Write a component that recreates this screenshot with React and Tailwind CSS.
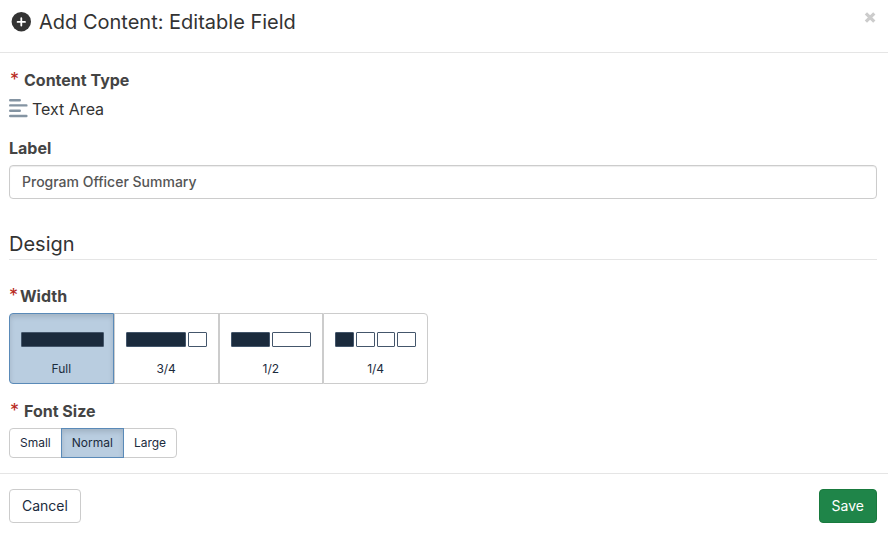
import React, { useState } from 'react';

const WIDTHS = [
  { id: 'full', label: 'Full', bars: [{ size: 'w-[83px]', filled: true }] },
  {
    id: 'three-quarters',
    label: '3/4',
    bars: [
      { size: 'w-[60px]', filled: true },
      { size: 'w-[19px]' }
    ]
  },
  {
    id: 'half',
    label: '1/2',
    bars: [
      { size: 'w-[39px]', filled: true },
      { size: 'w-[39px]' }
    ]
  },
  {
    id: 'quarter',
    label: '1/4',
    bars: [
      { size: 'w-[19px]', filled: true },
      { size: 'w-[19px]' },
      { size: 'w-[18px]' },
      { size: 'w-[19px]' }
    ]
  }
];

const FONT_SIZES = ['Small', 'Normal', 'Large'];

const SELECTED = 'z-10 border-[#5a8ab8] bg-[#b9cde0] shadow-[inset_0_3px_5px_rgba(0,0,0,0.125)]';
const UNSELECTED = 'border-[#cccccc] bg-white';

const PlusCircleIcon = () => (
  <svg className="size-5" viewBox="0 0 20 20" aria-hidden="true">
    <circle cx="10.3" cy="9.7" r="9.7" fill="#333333" />
    <path d="M10.3 6.2v7.4M6.6 9.9h7.4" stroke="#ffffff" strokeWidth="1.8" strokeLinecap="round" />
  </svg>
);

const AlignLeftIcon = () => (
  <svg className="h-5 w-[19px]" viewBox="0 0 19 20" fill="none" aria-hidden="true">
    <path
      d="M1.2 1.2h9.6M1.2 6.4h16.2M1.2 11.7h9.6M1.2 17h16.2"
      stroke="#8494a2"
      strokeWidth="2.4"
      strokeLinecap="round"
    />
  </svg>
);

const CloseIcon = () => (
  <svg className="size-3" viewBox="0 0 12 12" aria-hidden="true">
    <path d="M1.9 1.3l8.4 8.4M10.3 1.3L1.9 9.7" stroke="#cccccc" strokeWidth="3.2" />
  </svg>
);

const Required = () => (
  <span className="w-2 text-lg leading-6 font-normal text-[#b8291c]" aria-label="required">*</span>
);

const App = () => {
  const [label, setLabel] = useState('Program Officer Summary');
  const [width, setWidth] = useState('full');
  const [fontSize, setFontSize] = useState('Normal');

  return (
    <div
      className="bg-white font-['Inter',sans-serif] text-[#333333]"
      role="dialog"
      aria-labelledby="dialog-title"
    >
      {/* Header */}
      <header className="flex items-start justify-between border-b border-[#e5e5e5] pt-2 pr-3 pb-4 pl-[11px]">
        <div className="flex items-center gap-2">
          <PlusCircleIcon />
          <h1 id="dialog-title" className="text-[20px] leading-7">
            Add Content: Editable Field
          </h1>
        </div>
        <button type="button" className="mt-1" aria-label="Close">
          <CloseIcon />
        </button>
      </header>

      <form onSubmit={(e) => e.preventDefault()}>
        <div className="pt-[15px] pr-[11px] pb-[15px] pl-[9px]">
          {/* Content Type */}
          <div className="flex gap-1.5 pl-px text-base leading-6 font-bold text-[#444444]">
            <Required />
            <span>Content Type</span>
          </div>
          <div className="mt-[3px] flex items-center gap-1 text-base leading-7">
            <AlignLeftIcon />
            <span>Text Area</span>
          </div>

          {/* Label */}
          <label
            htmlFor="label"
            className="mt-[13px] block text-base leading-6 font-bold text-[#444444]"
          >
            Label
          </label>
          <input
            id="label"
            type="text"
            value={label}
            onChange={(e) => setLabel(e.target.value)}
            className="mt-[5px] block h-[34px] w-full rounded-sm border border-[#cccccc] px-3 pb-0.5 text-sm font-medium text-[#555555] shadow-[inset_0_1px_1px_rgba(0,0,0,0.075)] outline-none"
          />

          <h2 className="mt-[31px] border-b border-[#e5e5e5] pb-px text-[20px] leading-7">
            Design
          </h2>

          {/* Width */}
          <div
            id="width-label"
            className="mt-6 flex gap-[3px] text-base leading-6 font-bold text-[#444444]"
          >
            <Required />
            <span>Width</span>
          </div>
          <div
            className="mt-[5px] grid w-[419px] max-w-full grid-cols-4"
            role="group"
            aria-labelledby="width-label"
          >
            {WIDTHS.map((option) => (
              <button
                key={option.id}
                type="button"
                aria-pressed={width === option.id}
                onClick={() => setWidth(option.id)}
                className={`relative flex h-[71px] flex-col border px-[11px] pt-[18px] text-xs text-[#1b2b3d] first:rounded-l-sm last:rounded-r-sm ${
                  width === option.id ? SELECTED : UNSELECTED
                }`}
              >
                <span className="flex gap-0.5">
                  {option.bars.map((bar, index) => (
                    <span
                      key={index}
                      className={`h-[15px] shrink-0 rounded-[1px] border border-[#44566b] ${bar.size} ${
                        bar.filled ? 'bg-[#1b2b3d]' : 'bg-white'
                      }`}
                    />
                  ))}
                </span>
                <span className="mt-3.5 w-full text-center leading-4">{option.label}</span>
              </button>
            ))}
          </div>

          {/* Font Size */}
          <div
            id="font-size-label"
            className="mt-[15px] flex gap-1.5 pl-px text-base leading-6 font-bold text-[#444444]"
          >
            <Required />
            <span>Font Size</span>
          </div>
          <div className="mt-[5px] flex" role="group" aria-labelledby="font-size-label">
            {FONT_SIZES.map((size) => (
              <button
                key={size}
                type="button"
                aria-pressed={fontSize === size}
                onClick={() => setFontSize(size)}
                className={`relative -ml-px h-[30px] border px-2.5 text-xs text-[#1b2b3d] first:ml-0 first:rounded-l-sm last:rounded-r-sm ${
                  fontSize === size ? SELECTED : UNSELECTED
                }`}
              >
                {size}
              </button>
            ))}
          </div>
        </div>

        {/* Footer */}
        <footer className="flex justify-between border-t border-[#e5e5e5] pt-[15px] pr-[11px] pb-3 pl-[9px]">
          <button
            type="button"
            className="h-[34px] rounded-sm border border-[#cccccc] bg-white px-3 text-sm text-[#1b2b3d]"
          >
            Cancel
          </button>
          <button
            type="submit"
            className="h-[34px] rounded-sm border border-[#197a3e] bg-[#1f8549] px-3 text-sm text-white"
          >
            Save
          </button>
        </footer>
      </form>
    </div>
  );
};

export default App;
